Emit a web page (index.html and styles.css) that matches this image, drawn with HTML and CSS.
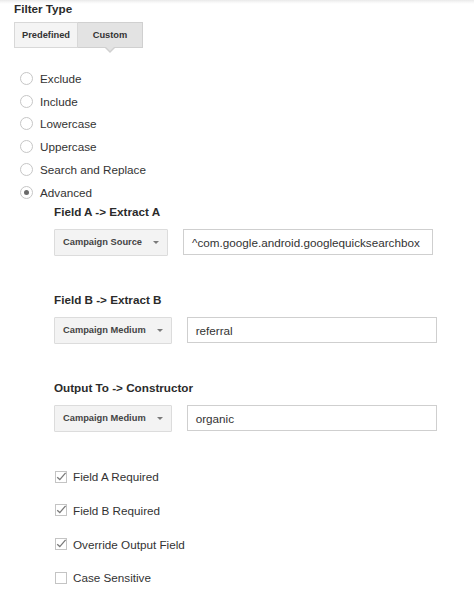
FILE: index.html
```html
<!DOCTYPE html>
<html>
<head>
<meta charset="utf-8">
<link rel="stylesheet" href="styles.css">
</head>
<body>
<div class="page">
  <div class="title">Filter Type</div>
  <div class="seg">
    <div class="seg-btn">Predefined</div>
    <div class="seg-btn active">Custom</div>
  </div>

  <div class="radios">
    <div class="radio"><span class="circle"></span><span>Exclude</span></div>
    <div class="radio"><span class="circle"></span><span>Include</span></div>
    <div class="radio"><span class="circle"></span><span>Lowercase</span></div>
    <div class="radio"><span class="circle"></span><span>Uppercase</span></div>
    <div class="radio"><span class="circle"></span><span>Search and Replace</span></div>
    <div class="radio"><span class="circle checked"></span><span>Advanced</span></div>
  </div>

  <div class="adv">
    <div class="section">
      <div class="heading">Field A -&gt; Extract A</div>
      <div class="row">
        <div class="dropdown"><span>Campaign Source</span><span class="arrow"></span></div>
        <div class="field">^com.google.android.googlequicksearchbox</div>
      </div>
    </div>
    <div class="section">
      <div class="heading">Field B -&gt; Extract B</div>
      <div class="row">
        <div class="dropdown"><span>Campaign Medium</span><span class="arrow"></span></div>
        <div class="field">referral</div>
      </div>
    </div>
    <div class="section">
      <div class="heading">Output To -&gt; Constructor</div>
      <div class="row">
        <div class="dropdown"><span>Campaign Medium</span><span class="arrow"></span></div>
        <div class="field">organic</div>
      </div>
    </div>

    <div class="checks">
      <div class="check"><span class="box"><svg width="12" height="12" viewBox="0 0 12 12"><polyline points="2.2,6.2 4.8,8.6 10.6,1.8" fill="none" stroke="#7a7a7a" stroke-width="1.3"/></svg></span><span>Field A Required</span></div>
      <div class="check"><span class="box"><svg width="12" height="12" viewBox="0 0 12 12"><polyline points="2.2,6.2 4.8,8.6 10.6,1.8" fill="none" stroke="#7a7a7a" stroke-width="1.3"/></svg></span><span>Field B Required</span></div>
      <div class="check"><span class="box"><svg width="12" height="12" viewBox="0 0 12 12"><polyline points="2.2,6.2 4.8,8.6 10.6,1.8" fill="none" stroke="#7a7a7a" stroke-width="1.3"/></svg></span><span>Override Output Field</span></div>
      <div class="check"><span class="box"></span><span>Case Sensitive</span></div>
    </div>
  </div>
</div>
</body>
</html>
```
FILE: styles.css
```css
html, body {
  margin: 0;
  padding: 0;
  background: #fff;
}
body {
  font-family: "Liberation Sans", Arial, sans-serif;
  color: #333;
  font-size: 11.7px;
}
.page {
  padding: 0 0 0 14px;
  min-height: 593px;
  box-sizing: border-box;
  background: linear-gradient(to bottom, #e9e9e9 0, #f6f6f6 2px, #fff 4px) no-repeat;
}
.title {
  padding-top: 2px;
  line-height: 14px;
  font-weight: bold;
  color: #2b2b2b;
}
.seg {
  display: inline-flex;
  margin-top: 6px;
}
.seg-btn {
  position: relative;
  box-sizing: border-box;
  height: 26px;
  width: 64px;
  display: flex;
  align-items: center;
  justify-content: center;
  font-size: 9.3px;
  font-weight: bold;
  color: #333;
  background: #f4f4f4;
  border: 1px solid #d8d8d8;
}
.seg-btn.active {
  width: 65px;
  background: #e3e3e3;
  border-left: none;
  border-color: #d0d0d0;
}
.seg-btn.active::before {
  content: "";
  position: absolute;
  left: 50%;
  bottom: -6px;
  margin-left: -5px;
  border-left: 5px solid transparent;
  border-right: 5px solid transparent;
  border-top: 5px solid #d0d0d0;
}
.seg-btn.active::after {
  content: "";
  position: absolute;
  left: 50%;
  bottom: -4px;
  margin-left: -4px;
  border-left: 4px solid transparent;
  border-right: 4px solid transparent;
  border-top: 4px solid #e3e3e3;
}
.radios {
  margin-top: 19px;
}
.radio {
  display: flex;
  align-items: center;
  height: 22.8px;
}
.circle {
  box-sizing: border-box;
  width: 13px;
  height: 13px;
  border-radius: 50%;
  border: 1px solid #c6c6c6;
  background: #fff;
  margin-left: 6px;
  margin-right: 7px;
  display: flex;
  align-items: center;
  justify-content: center;
}
.circle.checked::after {
  content: "";
  width: 5px;
  height: 5px;
  border-radius: 50%;
  background: #6a6a6a;
}
.adv {
  margin-left: 40px;
}
.section + .section {
  margin-top: 36px;
}
.heading {
  line-height: 16px;
  font-weight: bold;
  color: #2b2b2b;
}
.row {
  display: flex;
  align-items: center;
  margin-top: 9px;
  height: 27px;
}
.dropdown {
  box-sizing: border-box;
  height: 27px;
  display: flex;
  align-items: center;
  padding: 0 8px;
  font-size: 9.3px;
  font-weight: bold;
  color: #444;
  background: #f3f3f3;
  border: 1px solid #dcdcdc;
  border-radius: 1px;
}
.arrow {
  margin-left: 11px;
  width: 0;
  height: 0;
  border-left: 3px solid transparent;
  border-right: 3px solid transparent;
  border-top: 3px solid #7a7a7a;
}
.field {
  box-sizing: border-box;
  margin-left: 15px;
  width: 250px;
  height: 26px;
  display: flex;
  align-items: center;
  padding: 0 8px;
  border: 1px solid #cfcfcf;
  color: #333;
  white-space: nowrap;
  overflow: hidden;
}
.checks {
  margin-top: 28px;
}
.check {
  display: flex;
  align-items: center;
  height: 33.7px;
}
.box {
  box-sizing: border-box;
  width: 12px;
  height: 12px;
  border: 1px solid #c4c4c4;
  margin-left: 1px;
  margin-right: 6px;
  position: relative;
  background: #fff;
}
.box svg {
  position: absolute;
  left: -1px;
  top: -1px;
}
```
